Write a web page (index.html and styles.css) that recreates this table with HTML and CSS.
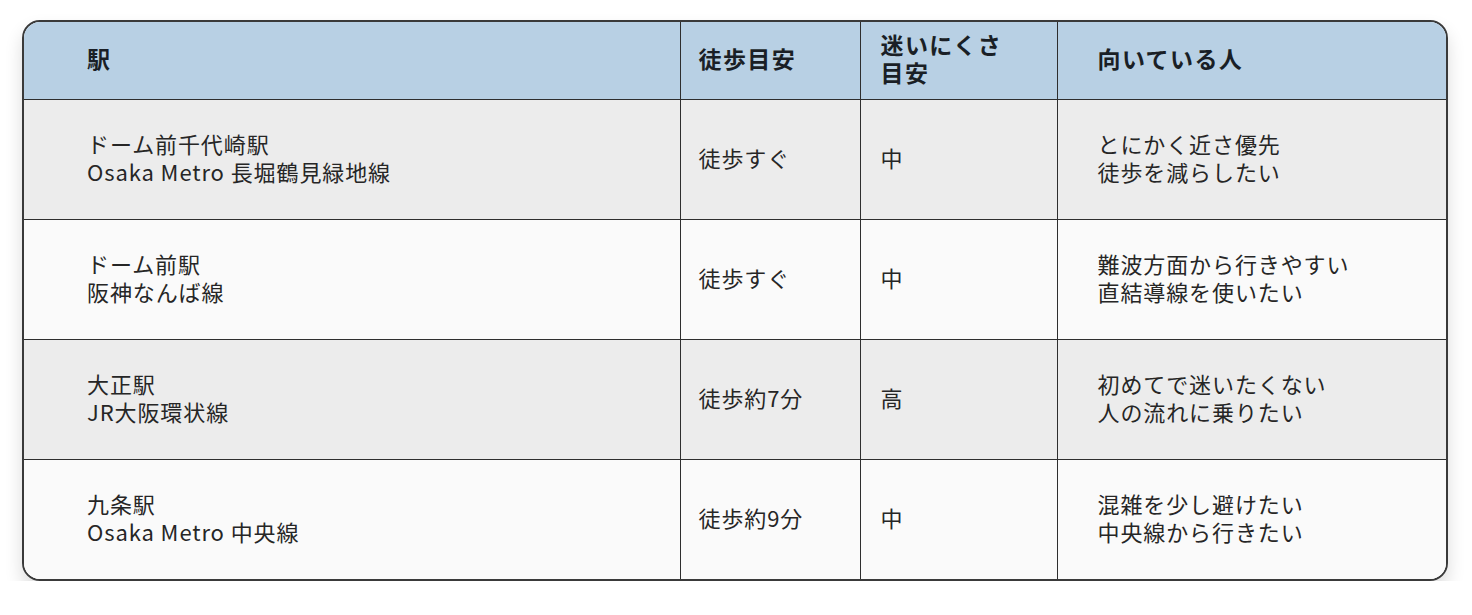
FILE: index.html
```html
<!DOCTYPE html>
<html lang="ja">
<head>
<meta charset="utf-8">
<link rel="stylesheet" href="styles.css">
</head>
<body>
<div class="card">
  <table class="tbl">
    <colgroup>
      <col class="c1"><col class="c2"><col class="c3"><col class="c4">
    </colgroup>
    <thead>
      <tr>
        <th class="p1"><span class="ln">駅</span></th>
        <th class="p2"><span class="ln">徒歩目安</span></th>
        <th class="p3"><span class="ln">迷いにくさ</span><span class="ln">目安</span></th>
        <th class="p4"><span class="ln">向いている人</span></th>
      </tr>
    </thead>
    <tbody>
      <tr class="odd">
        <td class="p1"><span class="ln">ドーム前千代崎駅</span><span class="ln">Osaka Metro 長堀鶴見緑地線</span></td>
        <td class="p2"><span class="ln">徒歩すぐ</span></td>
        <td class="p3"><span class="ln">中</span></td>
        <td class="p4"><span class="ln">とにかく近さ優先</span><span class="ln">徒歩を減らしたい</span></td>
      </tr>
      <tr class="even">
        <td class="p1"><span class="ln">ドーム前駅</span><span class="ln">阪神なんば線</span></td>
        <td class="p2"><span class="ln">徒歩すぐ</span></td>
        <td class="p3"><span class="ln">中</span></td>
        <td class="p4"><span class="ln">難波方面から行きやすい</span><span class="ln">直結導線を使いたい</span></td>
      </tr>
      <tr class="odd">
        <td class="p1"><span class="ln">大正駅</span><span class="ln">JR大阪環状線</span></td>
        <td class="p2"><span class="ln">徒歩約7分</span></td>
        <td class="p3"><span class="ln">高</span></td>
        <td class="p4"><span class="ln">初めてで迷いたくない</span><span class="ln">人の流れに乗りたい</span></td>
      </tr>
      <tr class="even">
        <td class="p1"><span class="ln">九条駅</span><span class="ln">Osaka Metro 中央線</span></td>
        <td class="p2"><span class="ln">徒歩約9分</span></td>
        <td class="p3"><span class="ln">中</span></td>
        <td class="p4"><span class="ln">混雑を少し避けたい</span><span class="ln">中央線から行きたい</span></td>
      </tr>
    </tbody>
  </table>
</div>
</body>
</html>
```

FILE: styles.css
```css
html, body {
  margin: 0;
  padding: 0;
  background: #ffffff;
}
body {
  font-family: "Noto Sans CJK JP", "Noto Sans", sans-serif;
  color: #222;
}
.card {
  margin: 20px 0 0 22px;
  width: 1426px;
  box-sizing: border-box;
  border: 2px solid #3a3a3a;
  border-radius: 18px;
  overflow: hidden;
  box-shadow: 0 10px 18px rgba(0,0,0,0.14);
}
.tbl {
  width: 100%;
  table-layout: fixed;
  border-collapse: collapse;
}
.c1 { width: 656px; }
.c2 { width: 180px; }
.c3 { width: 197px; }
.c4 { width: auto; }
th, td {
  border-left: 1.5px solid #2e2e2e;
  border-top: 1.5px solid #2e2e2e;
  vertical-align: middle;
  text-align: left;
  padding-top: 0;
  padding-bottom: 5px;
  font-size: 22px;
  line-height: 28px;
  letter-spacing: 0.9px;
}
.ln {
  display: block;
  height: 28px;
  overflow: visible;
  white-space: nowrap;
}
th:first-child, td:first-child { border-left: none; }
thead th { border-top: none; padding-bottom: 4px; }
thead tr {
  height: 77px;
  background: #b8d0e4;
}
thead th {
  font-weight: 700;
  font-size: 23px;
  letter-spacing: 1.4px;
  color: #1a1f26;
}
tbody tr { height: 120px; }
tbody td { color: #262626; font-weight: 400; }
.odd { background: #ececec; }
.even { background: #fafafa; }
.p1 { padding-left: 63px; }
.p2 { padding-left: 18px; }
.p3 { padding-left: 20px; }
.p4 { padding-left: 40px; }
```
